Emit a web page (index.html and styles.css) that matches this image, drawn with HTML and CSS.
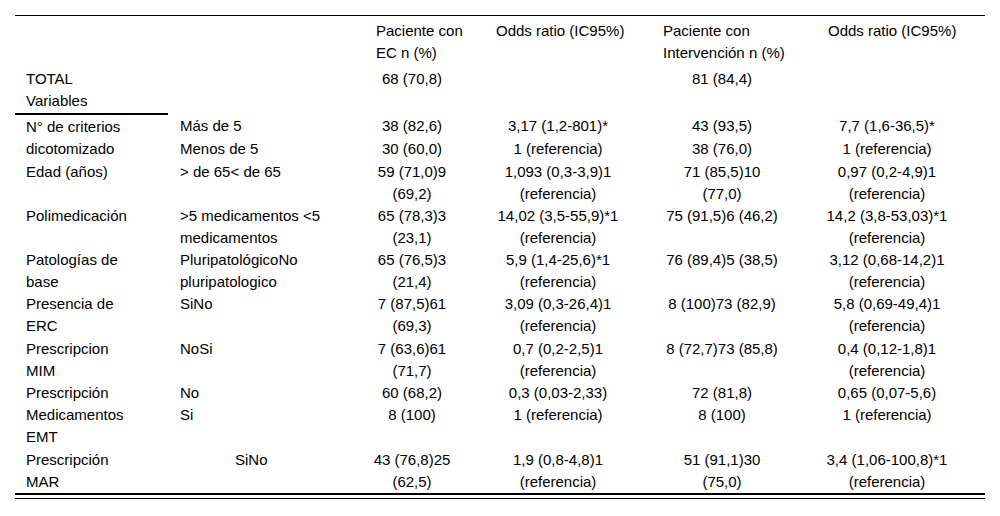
FILE: index.html
```html
<!DOCTYPE html>
<html lang="es">
<head>
<meta charset="utf-8">
<title>Tabla</title>
<link rel="stylesheet" href="styles.css">
</head>
<body>
<div class="wrap">
  <table class="tbl">
    <colgroup>
      <col class="c1"><col class="c2"><col class="c3"><col class="c4"><col class="c5"><col class="c6">
    </colgroup>
    <thead>
      <tr class="head">
        <th class="lab"></th>
        <th class="cat"></th>
        <th class="h3">Paciente con<br>EC n (%)</th>
        <th class="h4">Odds ratio (IC95%)</th>
        <th class="h5">Paciente con<br>Intervención n (%)</th>
        <th class="h6">Odds ratio (IC95%)</th>
      </tr>
    </thead>
    <tbody>
      <tr class="total">
        <td class="lab">TOTAL</td><td class="cat"></td><td class="num">68 (70,8)</td><td class="num"></td><td class="num">81 (84,4)</td><td class="num"></td>
      </tr>
      <tr class="vars">
        <td class="lab rule">Variables</td><td class="cat"></td><td class="num"></td><td class="num"></td><td class="num"></td><td class="num"></td>
      </tr>
      <tr class="first">
        <td class="lab">N° de criterios</td><td class="cat">Más de 5</td><td class="num">38 (82,6)</td><td class="num">3,17 (1,2-801)*</td><td class="num">43 (93,5)</td><td class="num">7,7 (1,6-36,5)*</td>
      </tr>
      <tr class="row">
        <td class="lab">dicotomizado</td><td class="cat">Menos de 5</td><td class="num">30 (60,0)</td><td class="num">1 (referencia)</td><td class="num">38 (76,0)</td><td class="num">1 (referencia)</td>
      </tr>
      <tr class="row">
        <td class="lab">Edad (años)</td><td class="cat">&gt; de 65&lt; de 65</td><td class="num">59 (71,0)9<br>(69,2)</td><td class="num">1,093 (0,3-3,9)1<br>(referencia)</td><td class="num">71 (85,5)10<br>(77,0)</td><td class="num">0,97 (0,2-4,9)1<br>(referencia)</td>
      </tr>
      <tr class="row">
        <td class="lab">Polimedicación</td><td class="cat">&gt;5 medicamentos &lt;5<br>medicamentos</td><td class="num">65 (78,3)3<br>(23,1)</td><td class="num">14,02 (3,5-55,9)*1<br>(referencia)</td><td class="num">75 (91,5)6 (46,2)</td><td class="num">14,2 (3,8-53,03)*1<br>(referencia)</td>
      </tr>
      <tr class="row">
        <td class="lab">Patologías de<br>base</td><td class="cat">PluripatológicoNo<br>pluripatologico</td><td class="num">65 (76,5)3<br>(21,4)</td><td class="num">5,9 (1,4-25,6)*1<br>(referencia)</td><td class="num">76 (89,4)5 (38,5)</td><td class="num">3,12 (0,68-14,2)1<br>(referencia)</td>
      </tr>
      <tr class="row">
        <td class="lab">Presencia de<br>ERC</td><td class="cat">SiNo</td><td class="num">7 (87,5)61<br>(69,3)</td><td class="num">3,09 (0,3-26,4)1<br>(referencia)</td><td class="num">8 (100)73 (82,9)</td><td class="num">5,8 (0,69-49,4)1<br>(referencia)</td>
      </tr>
      <tr class="row">
        <td class="lab">Prescripcion<br>MIM</td><td class="cat">NoSi</td><td class="num">7 (63,6)61<br>(71,7)</td><td class="num">0,7 (0,2-2,5)1<br>(referencia)</td><td class="num">8 (72,7)73 (85,8)</td><td class="num">0,4 (0,12-1,8)1<br>(referencia)</td>
      </tr>
      <tr class="row">
        <td class="lab">Prescripción</td><td class="cat">No</td><td class="num">60 (68,2)</td><td class="num">0,3 (0,03-2,33)</td><td class="num">72 (81,8)</td><td class="num">0,65 (0,07-5,6)</td>
      </tr>
      <tr class="row">
        <td class="lab">Medicamentos<br>EMT</td><td class="cat">Si</td><td class="num">8 (100)</td><td class="num">1 (referencia)</td><td class="num">8 (100)</td><td class="num">1 (referencia)</td>
      </tr>
      <tr class="row last">
        <td class="lab">Prescripción<br>MAR</td><td class="cat indent">SiNo</td><td class="num">43 (76,8)25<br>(62,5)</td><td class="num">1,9 (0,8-4,8)1<br>(referencia)</td><td class="num">51 (91,1)30<br>(75,0)</td><td class="num">3,4 (1,06-100,8)*1<br>(referencia)</td>
      </tr>
    </tbody>
  </table>
</div>
</body>
</html>
```
FILE: styles.css
```css
html, body {
  margin: 0;
  padding: 0;
  background: #fff;
}

body {
  font-family: "Liberation Sans", Arial, sans-serif;
  font-size: 15px;
  line-height: 22px;
  color: #000;
}

.wrap {
  width: 970px;
  margin: 15px 15px 0 15px;
  border-bottom: 1px solid #000;
  padding-bottom: 3px;
}

.tbl {
  width: 970px;
  table-layout: fixed;
  border-collapse: collapse;
  border-top: 1px solid #000;
}

.c1 { width: 153px; }
.c2 { width: 195px; }
.c3 { width: 98px; }
.c4 { width: 194px; }
.c5 { width: 134px; }
.c6 { width: 196px; }

.tbl th,
.tbl td {
  padding: 0;
  vertical-align: top;
  white-space: nowrap;
  font-weight: normal;
  text-align: left;
}

.tbl .head th {
  padding-top: 4px;
  padding-bottom: 4px;
}

.tbl .head .h3 { padding-left: 13px; }
.tbl .head .h4 { padding-left: 35px; }
.tbl .head .h5 { padding-left: 8px; }
.tbl .head .h6 { padding-left: 39px; }

.tbl .lab { padding-left: 11px; }
.tbl .cat { padding-left: 12px; }
.tbl .indent { padding-left: 67px; }
.tbl .num { text-align: center; }

.tbl .vars td { padding-bottom: 1px; }
.tbl .rule { border-bottom: 2px solid #000; }

.tbl .first td { padding-top: 1px; }
.tbl .row td { padding-top: 0.3px; }

.tbl .last td { border-bottom: 2px solid #000; }
```
